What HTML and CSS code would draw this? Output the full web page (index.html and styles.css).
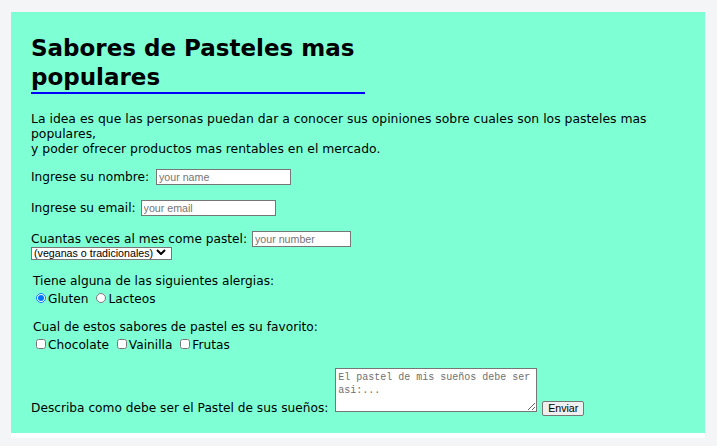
FILE: index.html
```html
<!DOCTYPE html>
<html lang="es">
<head>
<meta charset="utf-8">
<title>Sabores de Pasteles mas populares</title>
<link rel="stylesheet" href="styles.css">
</head>
<body>
<div class="page">
  <form class="card">
    <h1 class="title">Sabores de Pasteles mas populares</h1>
    <p class="intro">La idea es que las personas puedan dar a conocer sus opiniones sobre cuales son los pasteles mas populares,<br>y poder ofrecer productos mas rentables en el mercado.</p>

    <div class="row row-first"><label for="nombre">Ingrese su nombre:</label> <input class="field field-name" id="nombre" type="text" placeholder="your name"></div>
    <div class="row"><label for="email">Ingrese su email:</label> <input class="field field-email" id="email" type="email" placeholder="your email"></div>
    <div class="row"><label for="veces">Cuantas veces al mes come pastel:</label> <input class="field field-num" id="veces" type="text" placeholder="your number"></div>
    <span class="kind-wrap">
      <select class="kind">
        <option>(veganas o tradicionales)</option>
      </select>
      <svg class="chev" viewBox="0 0 10 6" width="10" height="6" aria-hidden="true"><path d="M1 1l4 4 4-4" fill="none" stroke="#000" stroke-width="2"/></svg>
    </span>

    <div class="group">
      <div class="line">Tiene alguna de las siguientes alergias:</div>
      <div class="line opts"><input class="opt" type="radio" name="alergia" id="gluten" checked><label for="gluten">Gluten</label> <input class="opt" type="radio" name="alergia" id="lacteos"><label for="lacteos">Lacteos</label></div>
    </div>

    <div class="group group-flavor">
      <div class="line">Cual de estos sabores de pastel es su favorito:</div>
      <div class="line opts"><input class="opt" type="checkbox" id="choco"><label for="choco">Chocolate</label> <input class="opt" type="checkbox" id="vainilla"><label for="vainilla">Vainilla</label> <input class="opt" type="checkbox" id="frutas"><label for="frutas">Frutas</label></div>
    </div>

    <div class="row row-dream"><label for="suenos">Describa como debe ser el Pastel de sus sueños:</label> <textarea class="dream" id="suenos" placeholder="El pastel de mis sueños debe ser asi:..."></textarea> <button class="send" type="button">Enviar</button></div>
  </form>
</div>
</body>
</html>
```

FILE: styles.css
```css
* {
  box-sizing: border-box;
}

html,
body {
  margin: 0;
}

body {
  background: #f4f5f7;
  padding: 12px 12px 0 11px;
  font-family: "DejaVu Sans", Verdana, sans-serif;
  font-size: 12.2px;
  line-height: 15px;
  color: #000;
}

.page {
  background: #fff;
  padding-bottom: 5px;
}

.card {
  background: #7fffd4;
  padding: 22px 20px 17px;
}

.title {
  width: 334px;
  margin: 0;
  font-size: 23px;
  line-height: 29px;
  font-weight: bold;
  border-bottom: 2px solid #0000ff;
}

.intro {
  margin: 17px 0 0;
  font-size: 12.4px;
}

.row {
  margin-top: 15px;
}

.row-first {
  margin-top: 13px;
}

.field {
  height: 16px;
  padding: 1px 2px;
  border: 1px solid #767676;
  border-radius: 0;
  margin: 0 0 0 1px;
  font: 10.67px "Liberation Sans", Arial, sans-serif;
  color: #000;
  background: #fff;
  vertical-align: baseline;
}

.field::placeholder {
  color: #757575;
}

.field-name {
  width: 135px;
  margin-left: 3px;
}

.field-email {
  width: 135px;
}

.field-num {
  width: 99px;
}

.kind-wrap {
  display: block;
  position: relative;
  width: 141px;
  height: 13px;
}

.kind {
  display: block;
  width: 141px;
  height: 13px;
  margin: 0;
  padding: 0 16px 0 2px;
  border: 1px solid #767676;
  border-radius: 0;
  font: 10.67px/11px "Liberation Sans", Arial, sans-serif;
  color: #000;
  background: #fff;
  appearance: none;
  -webkit-appearance: none;
}

.chev {
  position: absolute;
  right: 6px;
  top: 2px;
  pointer-events: none;
}

.group {
  margin-top: 14px;
  padding-left: 2px;
}

.group-flavor {
  margin-top: 13px;
}

.opts {
  margin-top: 2px;
}

.opt {
  width: 10px;
  height: 10px;
  margin: 2px 2px 0 3px;
  vertical-align: baseline;
}

.opt + label + .opt {
  margin-left: 4px;
}

.row-dream {
  margin-top: 15px;
}

.dream {
  width: 202px;
  height: 44px;
  padding: 2px;
  margin: 0 0 0 3px;
  border: 1px solid #767676;
  border-radius: 0;
  font: 10px/13.3px "Liberation Mono", "DejaVu Sans Mono", monospace;
  color: #000;
  background: #fff;
  vertical-align: baseline;
}

.dream::placeholder {
  color: #6f6f6f;
}

.send {
  height: 15px;
  padding: 0 5px;
  margin: 0 0 0 1px;
  border: 1px solid #767676;
  border-radius: 2px;
  background: #efefef;
  font: 10.67px "Liberation Sans", Arial, sans-serif;
  color: #000;
  vertical-align: baseline;
}
```
